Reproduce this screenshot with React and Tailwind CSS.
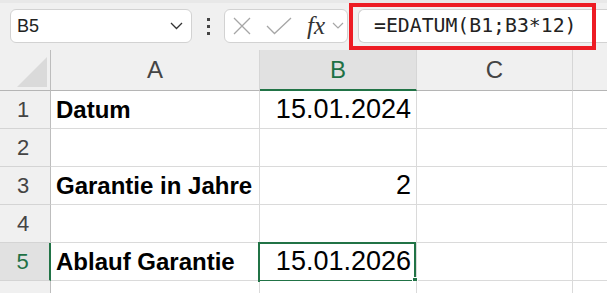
import React from "react";

const sans = { fontFamily: '"Liberation Sans", Arial, sans-serif' };

function Cell({ children, className = "" }) {
  return (
    <div className={"h-[38px] border-r border-b border-[#dadada] bg-white flex items-center " + className}>
      {children}
    </div>
  );
}

function RowHead({ n, selected }) {
  return (
    <div
      className={
        "h-[38px] border-b border-[#d4d4d4] flex items-center justify-center text-[22px] " +
        (selected
          ? "bg-[#e1e1e1] text-[#1e7145] border-r-2 border-r-[#217346]"
          : "bg-[#f0f0f0] text-[#444] border-r border-r-[#bdbdbd]")
      }
    >
      <span className="pr-[4px]">{n}</span>
    </div>
  );
}

export default function App() {
  const rows = [
    { n: "1", a: "Datum", b: "15.01.2024" },
    { n: "2", a: "", b: "" },
    { n: "3", a: "Garantie in Jahre", b: "2" },
    { n: "4", a: "", b: "" },
    { n: "5", a: "Ablauf Garantie", b: "15.01.2026", sel: true },
    { n: "", a: "", b: "" },
  ];
  return (
    <div className="w-[607px] h-[293px] overflow-hidden bg-[#f0f0f0] relative" style={sans}>
      {/* toolbar */}
      <div className="h-[3px] bg-[#e8e8e8]" />
      <div className="h-[47px] flex items-start pt-[6px] pl-[10px]">
        <div className="w-[182px] h-[34px] bg-white border border-[#d2d2d2] rounded-[6px] flex items-center justify-between pl-[6px] pr-[8px]">
          <span className="text-[18px] text-[#222]">B5</span>
          <svg width="13" height="8" viewBox="0 0 13 8">
            <path d="M1 1 L6.5 6.5 L12 1" fill="none" stroke="#333" strokeWidth="1.3" />
          </svg>
        </div>
        <div className="ml-[15px] h-[34px] flex flex-col justify-center gap-[4px]">
          <div className="w-[3px] h-[3px] bg-[#444]" />
          <div className="w-[3px] h-[3px] bg-[#444]" />
          <div className="w-[3px] h-[3px] bg-[#444]" />
        </div>
        <div className="ml-[14px] w-[124px] h-[34px] bg-white border border-[#d2d2d2] rounded-[6px] flex items-center pl-[8px]">
          <svg width="18" height="18" viewBox="0 0 18 18">
            <path d="M1 1 L17 17 M17 1 L1 17" stroke="#a6a6a6" strokeWidth="1.3" fill="none" />
          </svg>
          <svg className="ml-[15px]" width="26" height="18" viewBox="0 0 26 18">
            <path d="M1 9 L8.5 16.5 L25 1" stroke="#a6a6a6" strokeWidth="1.3" fill="none" />
          </svg>
          <span
            className="ml-[15px] text-[25px] italic text-[#333] leading-none pb-[2px]"
            style={{ fontFamily: '"Liberation Serif", "Times New Roman", serif' }}
          >
            fx
          </span>
          <svg className="ml-[7px]" width="12" height="8" viewBox="0 0 12 8">
            <path d="M1 1 L6 6 L11 1" fill="none" stroke="#a6a6a6" strokeWidth="1.2" />
          </svg>
        </div>
        <div className="ml-[10px] flex-1 h-[34px] bg-white border border-[#d2d2d2] rounded-l-[6px] border-r-0 flex items-center pl-[15px]">
          <span
            className="text-[19.8px] text-[#222]"
            style={{ fontFamily: '"DejaVu Sans Mono", "Liberation Mono", monospace' }}
          >
            =EDATUM(B1;B3*12)
          </span>
        </div>
      </div>
      {/* red highlight */}
      <div className="absolute left-[349px] top-[3px] w-[247px] h-[47px] border-[4px] border-[#ed1c24]" />

      {/* grid */}
      <div className="grid grid-cols-[51px_209px_157px_156px_1fr]">
        <div className="h-[41px] bg-[#f0f0f0] border-r border-b border-r-[#bdbdbd] border-b-[#b5b5b5] flex items-end justify-end pr-[3px] pb-[3px]">
          <svg width="30" height="30" viewBox="0 0 30 30">
            <path d="M30 0 L30 30 L0 30 Z" fill="#dadada" />
          </svg>
        </div>
        <div className="h-[41px] bg-[#f0f0f0] border-r border-r-[#d6d6d6] border-b border-b-[#b5b5b5] flex items-center justify-center text-[24px] text-[#444]">
          A
        </div>
        <div className="h-[41px] bg-[#e1e1e1] border-r border-r-[#d6d6d6] border-b-2 border-b-[#217346] flex items-center justify-center text-[24px] text-[#1e7145]">
          B
        </div>
        <div className="h-[41px] bg-[#f0f0f0] border-r border-r-[#d6d6d6] border-b border-b-[#b5b5b5] flex items-center justify-center text-[24px] text-[#444]">
          C
        </div>
        <div className="h-[41px] bg-[#f0f0f0] border-b border-b-[#b5b5b5]" />

        {rows.map((r, i) => (
          <React.Fragment key={i}>
            <RowHead n={r.n} selected={r.sel} />
            <Cell className="pl-[5px]">
              <span className="text-[24px] font-bold text-black whitespace-nowrap">{r.a}</span>
            </Cell>
            <Cell className="justify-end pr-[5px] relative">
              <span className="text-[27px] text-black">{r.b}</span>
              {r.sel && (
                <>
                  <div className="absolute -left-[2px] -top-[1px] w-[158px] h-[40px] border-2 border-[#217346]" />
                  <div className="absolute -right-[2px] -bottom-[3px] w-[6px] h-[6px] bg-[#217346] border border-white" />
                </>
              )}
            </Cell>
            <Cell />
            <div className="h-[38px] border-b border-[#dadada] bg-white" />
          </React.Fragment>
        ))}
      </div>
    </div>
  );
}
